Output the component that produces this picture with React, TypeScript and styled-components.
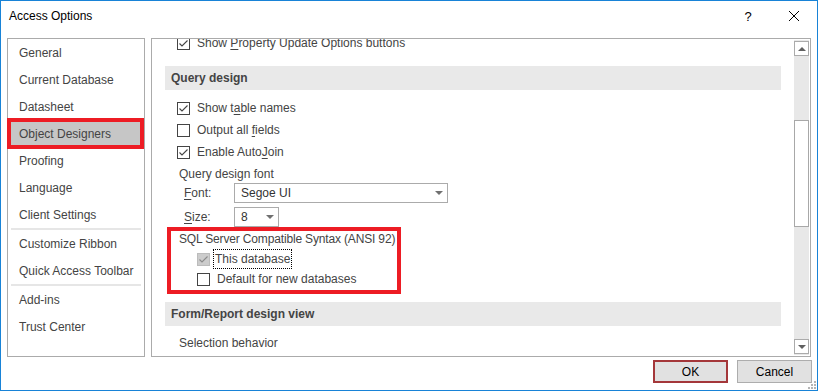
import React from "react";
import styled, { createGlobalStyle } from "styled-components";

//global
const GlobalStyle = createGlobalStyle`
  html, body {
    margin: 0;
    padding: 0;
    background: #fff;
  }
  body {
    font-family: "Liberation Sans", Arial, sans-serif;
    font-size: 12px;
    color: #262626;
  }
`;

//styles
const Window = styled.div`
  position: relative;
  box-sizing: border-box;
  width: 818px;
  height: 391px;
  border: 1px solid #1883d7;
  background: #fff;
  display: flex;
  flex-direction: column;
`;

const TitleBar = styled.div`
  height: 37px;
  display: flex;
  align-items: center;
  padding: 0 0 7px 8px;
  box-sizing: border-box;
`;

const Title = styled.div`
  flex: 1;
  color: #000;
  font-size: 12px;
`;

const TitleButton = styled.div`
  width: 46px;
  display: flex;
  justify-content: center;
  align-items: center;
  color: #000;
  font-size: 13px;
`;

const Main = styled.div`
  height: 319px;
  display: flex;
  gap: 6px;
  padding: 0 6px;
`;

const Nav = styled.div`
  width: 138px;
  box-sizing: border-box;
  border: 1px solid #ababab;
  display: flex;
  flex-direction: column;
`;

const NavItem = styled.div<{ $active?: boolean }>`
  position: relative;
  height: 27px;
  flex-shrink: 0;
  display: flex;
  align-items: center;
  padding-left: 11px;
  color: #444;
  background: ${(p) => (p.$active ? "#c6c6c6" : "transparent")};

  ${(p) =>
    p.$active &&
    `
    &::after {
      content: "";
      position: absolute;
      top: -2px;
      bottom: -2px;
      left: -1px;
      right: 0;
      border: 4px solid #ed1c24;
    }
  `}
`;

const NavSeparator = styled.div`
  height: 2px;
  margin: 0 3px;
  background: #e6e6e6;
  flex-shrink: 0;
`;

const Panel = styled.div`
  flex: 1;
  box-sizing: border-box;
  border: 1px solid #ababab;
  display: flex;
  overflow: hidden;
`;

const Scroller = styled.div`
  flex: 1;
  overflow: hidden;
`;

// list is scrolled a few pixels down, so the first row is clipped
const Inner = styled.div`
  margin-top: -7px;
  display: flex;
  flex-direction: column;
`;

const Row = styled.div<{ $indent?: number; $h?: number; $mt?: number }>`
  height: ${(p) => p.$h ?? 22}px;
  margin-top: ${(p) => p.$mt ?? 0}px;
  display: flex;
  align-items: center;
  padding-left: ${(p) => p.$indent ?? 25}px;
  flex-shrink: 0;
  color: #444;
  white-space: nowrap;
`;

const SectionBand = styled.div<{ $mt: number }>`
  margin: ${(p) => p.$mt}px 13px 0 13px;
  height: 24px;
  background: #e9e9e9;
  display: flex;
  align-items: center;
  padding-left: 6px;
  font-weight: bold;
  color: #444;
  flex-shrink: 0;
`;

const Box = styled.div<{ $disabled?: boolean }>`
  width: 13px;
  height: 13px;
  box-sizing: border-box;
  border: 1px solid ${(p) => (p.$disabled ? "#bcbcbc" : "#444")};
  background: ${(p) => (p.$disabled ? "#cccccc" : "#fff")};
  margin-right: 7px;
  display: flex;
  flex-shrink: 0;
`;

const Label = styled.span<{ $focus?: boolean }>`
  padding: ${(p) => (p.$focus ? "2px 1px" : "0")};
  margin-left: ${(p) => (p.$focus ? "-3px" : "0")};
  outline: ${(p) => (p.$focus ? "1px dotted #000" : "none")};
`;

const FieldLabel = styled.span`
  width: 50px;
  color: #444;
`;

const Select = styled.div<{ $w: number }>`
  width: ${(p) => p.$w}px;
  height: 20px;
  box-sizing: border-box;
  border: 1px solid #ababab;
  background: #fff;
  display: flex;
  align-items: center;
  padding: 0 4px 0 6px;
  color: #333;
`;

const SelectText = styled.span`
  flex: 1;
`;

const Caret = styled.span`
  width: 0;
  height: 0;
  border-left: 4px solid transparent;
  border-right: 4px solid transparent;
  border-top: 4px solid #707070;
`;

const Group = styled.div`
  position: relative;
  margin-top: 2px;
  display: flex;
  flex-direction: column;

  &::after {
    content: "";
    position: absolute;
    top: -2px;
    bottom: -5px;
    left: 15px;
    width: 234px;
    box-sizing: border-box;
    border: 4px solid #ed1c24;
    pointer-events: none;
  }
`;

const GroupTitle = styled.span`
  letter-spacing: -0.16px;
`;

const ScrollBar = styled.div`
  width: 15px;
  margin: 1px 1px 1px 0;
  background: #e8e8e8;
  display: flex;
  flex-direction: column;
`;

const ScrollButton = styled.div<{ $down?: boolean }>`
  height: 15px;
  box-sizing: border-box;
  border: 1px solid #ababab;
  background: #fff;
  display: flex;
  align-items: center;
  justify-content: center;
  margin: ${(p) => (p.$down ? "0 0 1px" : "1px 0 0")};
`;

const Arrow = styled.span<{ $up?: boolean }>`
  width: 0;
  height: 0;
  border-left: 4px solid transparent;
  border-right: 4px solid transparent;
  ${(p) => (p.$up ? "border-bottom: 4px solid #606060;" : "border-top: 4px solid #606060;")}
`;

const Track = styled.div`
  flex: 1;
  padding-top: 64px;
`;

const Thumb = styled.div`
  height: 107px;
  box-sizing: border-box;
  border: 1px solid #a8a8a8;
  background: #fff;
`;

const Footer = styled.div`
  flex: 1;
  display: flex;
  justify-content: flex-end;
  align-items: flex-start;
  gap: 9px;
  padding: 3px 5px 0 0;
`;

const Button = styled.div<{ $default?: boolean }>`
  width: 75px;
  height: 23px;
  box-sizing: border-box;
  border: ${(p) => (p.$default ? "2px solid #a4373a" : "1px solid #adadad")};
  background: #e1e1e1;
  display: flex;
  align-items: center;
  justify-content: center;
  color: #000;
`;

const Grip = styled.svg`
  position: absolute;
  right: 1px;
  bottom: 1px;
`;

const U = styled.span`
  text-decoration: underline;
  text-underline-offset: 2px;
`;

const Check = ({ disabled }: { disabled?: boolean }) => (
  <Box $disabled={disabled}>
    <svg width="11" height="11" viewBox="0 0 11 11">
      <polyline
        points="1.5,5.5 4,8 9.5,2.5"
        fill="none"
        stroke={disabled ? "#8a8a8a" : "#444"}
        strokeWidth="1.1"
      />
    </svg>
  </Box>
);

const navItems = [
  ["General", "Current Database", "Datasheet", "Object Designers", "Proofing", "Language", "Client Settings"],
  ["Customize Ribbon", "Quick Access Toolbar"],
  ["Add-ins", "Trust Center"],
];

const App: React.FC = () => {
  return (
    <>
      <GlobalStyle />
      <Window>
        <TitleBar>
          <Title>Access Options</Title>
          <TitleButton>?</TitleButton>
          <TitleButton>
            <svg width="12" height="12" viewBox="0 0 12 12">
              <path d="M1 1 L11 11 M11 1 L1 11" stroke="#000" strokeWidth="1" />
            </svg>
          </TitleButton>
        </TitleBar>

        <Main>
          <Nav>
            {navItems.map((group, gi) => (
              <React.Fragment key={gi}>
                {gi > 0 && <NavSeparator />}
                {group.map((name) => (
                  <NavItem key={name} $active={name === "Object Designers"}>
                    {name}
                  </NavItem>
                ))}
              </React.Fragment>
            ))}
          </Nav>

          <Panel>
            <Scroller>
              <Inner>
                <Row>
                  <Check />
                  <Label>
                    Show <U>P</U>roperty Update Options buttons
                  </Label>
                </Row>

                <SectionBand $mt={12}>Query design</SectionBand>

                <Row $mt={7}>
                  <Check />
                  <Label>
                    Show t<U>a</U>ble names
                  </Label>
                </Row>
                <Row>
                  <Box />
                  <Label>
                    Output all <U>f</U>ields
                  </Label>
                </Row>
                <Row>
                  <Check />
                  <Label>
                    Enable Auto<U>J</U>oin
                  </Label>
                </Row>
                <Row $indent={27}>Query design font</Row>
                <Row $indent={32} $h={20} $mt={-2}>
                  <FieldLabel>
                    <U>F</U>ont:
                  </FieldLabel>
                  <Select $w={214}>
                    <SelectText>Segoe UI</SelectText>
                    <Caret />
                  </Select>
                </Row>
                <Row $indent={32} $h={20} $mt={4}>
                  <FieldLabel>
                    <U>S</U>ize:
                  </FieldLabel>
                  <Select $w={45}>
                    <SelectText>8</SelectText>
                    <Caret />
                  </Select>
                </Row>

                <Group>
                  <Row $indent={27} $h={20}>
                    <GroupTitle>SQL Server Compatible Syntax (ANSI 92)</GroupTitle>
                  </Row>
                  <Row $indent={45} $h={20}>
                    <Check disabled />
                    <Label $focus>This database</Label>
                  </Row>
                  <Row $indent={45} $h={20}>
                    <Box />
                    <Label>Default for new databases</Label>
                  </Row>
                </Group>

                <SectionBand $mt={13}>Form/Report design view</SectionBand>

                <Row $indent={27} $mt={6}>
                  Selection behavior
                </Row>
              </Inner>
            </Scroller>

            <ScrollBar>
              <ScrollButton>
                <Arrow $up />
              </ScrollButton>
              <Track>
                <Thumb />
              </Track>
              <ScrollButton $down>
                <Arrow />
              </ScrollButton>
            </ScrollBar>
          </Panel>
        </Main>

        <Footer>
          <Button $default>OK</Button>
          <Button>Cancel</Button>
        </Footer>

        <Grip width="8" height="8" viewBox="0 0 8 8">
          <rect x="6" y="0" width="2" height="2" fill="#b5b5b5" />
          <rect x="3" y="3" width="2" height="2" fill="#b5b5b5" />
          <rect x="6" y="3" width="2" height="2" fill="#b5b5b5" />
          <rect x="0" y="6" width="2" height="2" fill="#b5b5b5" />
          <rect x="3" y="6" width="2" height="2" fill="#b5b5b5" />
          <rect x="6" y="6" width="2" height="2" fill="#b5b5b5" />
        </Grip>
      </Window>
    </>
  );
};

export default App;
